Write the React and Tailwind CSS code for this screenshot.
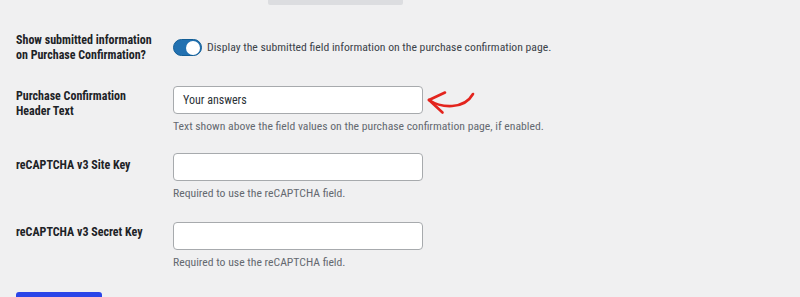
import React from "react";

const font = { fontFamily: "'Liberation Sans Narrow', 'Roboto Condensed', Roboto, 'Liberation Sans', sans-serif" };

function Label({ children, className = "" }) {
  return (
    <div className={"w-[157px] shrink-0 text-[12px] leading-[14.5px] font-bold text-[#1d2327] " + className}>
      {children}
    </div>
  );
}

function TextInput({ value = "" }) {
  return (
    <div className="w-[250px] h-[28px] rounded-[4px] border border-[#a7aaad] bg-white flex items-center px-[9px] text-[12px] text-[#2c3338]">
      {value}
    </div>
  );
}

function Desc({ children }) {
  return <div className="text-[11.7px] leading-[14px] text-[#646970] mt-[5px]">{children}</div>;
}

export default function App() {
  return (
    <div className="w-[800px] h-[297px] overflow-hidden bg-[#f0f0f1] flex flex-col" style={font}>
      <div className="h-[5px] flex shrink-0">
        <div className="ml-[268px] w-[135px] h-[5px] bg-[#dcdde0] rounded-b-[2px]" />
      </div>

      <div className="px-[16px] flex flex-col">
        {/* Row 1 */}
        <div className="flex mt-[28px]">
          <Label>
            Show submitted information
            <br />
            on Purchase Confirmation?
          </Label>
          <div className="flex items-center gap-[5px] mt-[6px] h-[17px]">
            <div className="w-[29px] h-[17px] rounded-full bg-[#2271b1] border border-[#135e96] flex items-center justify-end pr-[1px]">
              <div className="w-[14px] h-[14px] rounded-full bg-white" />
            </div>
            <span className="text-[11.7px] text-[#3c434a]">
              Display the submitted field information on the purchase confirmation page.
            </span>
          </div>
        </div>

        {/* Row 2 */}
        <div className="flex mt-[24px]">
          <Label className="pt-[3px]">
            Purchase Confirmation
            <br />
            Header Text
          </Label>
          <div className="flex flex-col">
            <div className="relative">
              <TextInput value="Your answers" />
              <svg
                className="absolute left-[253px] top-[2px]"
                width="50"
                height="28"
                viewBox="0 0 50 28"
                fill="none"
                stroke="#e3241d"
                strokeWidth="2.6"
                strokeLinecap="round"
                strokeLinejoin="round"
              >
                <path d="M3 12 C 15 20, 38 22, 47 6" />
                <path d="M3 12 L 19 4.5" />
                <path d="M3 12 L 16.5 24.5" />
              </svg>
            </div>
            <Desc>Text shown above the field values on the purchase confirmation page, if enabled.</Desc>
          </div>
        </div>

        {/* Row 3 */}
        <div className="flex mt-[20px]">
          <Label className="pt-[5px]">reCAPTCHA v3 Site Key</Label>
          <div className="flex flex-col">
            <TextInput />
            <Desc>Required to use the reCAPTCHA field.</Desc>
          </div>
        </div>

        {/* Row 4 */}
        <div className="flex mt-[22px]">
          <Label className="pt-[3px]">reCAPTCHA v3 Secret Key</Label>
          <div className="flex flex-col">
            <TextInput />
            <Desc>Required to use the reCAPTCHA field.</Desc>
          </div>
        </div>

        <div className="mt-[23px] w-[86px] h-[20px] rounded-[3px] bg-[#2a45e8]" />
      </div>
    </div>
  );
}
